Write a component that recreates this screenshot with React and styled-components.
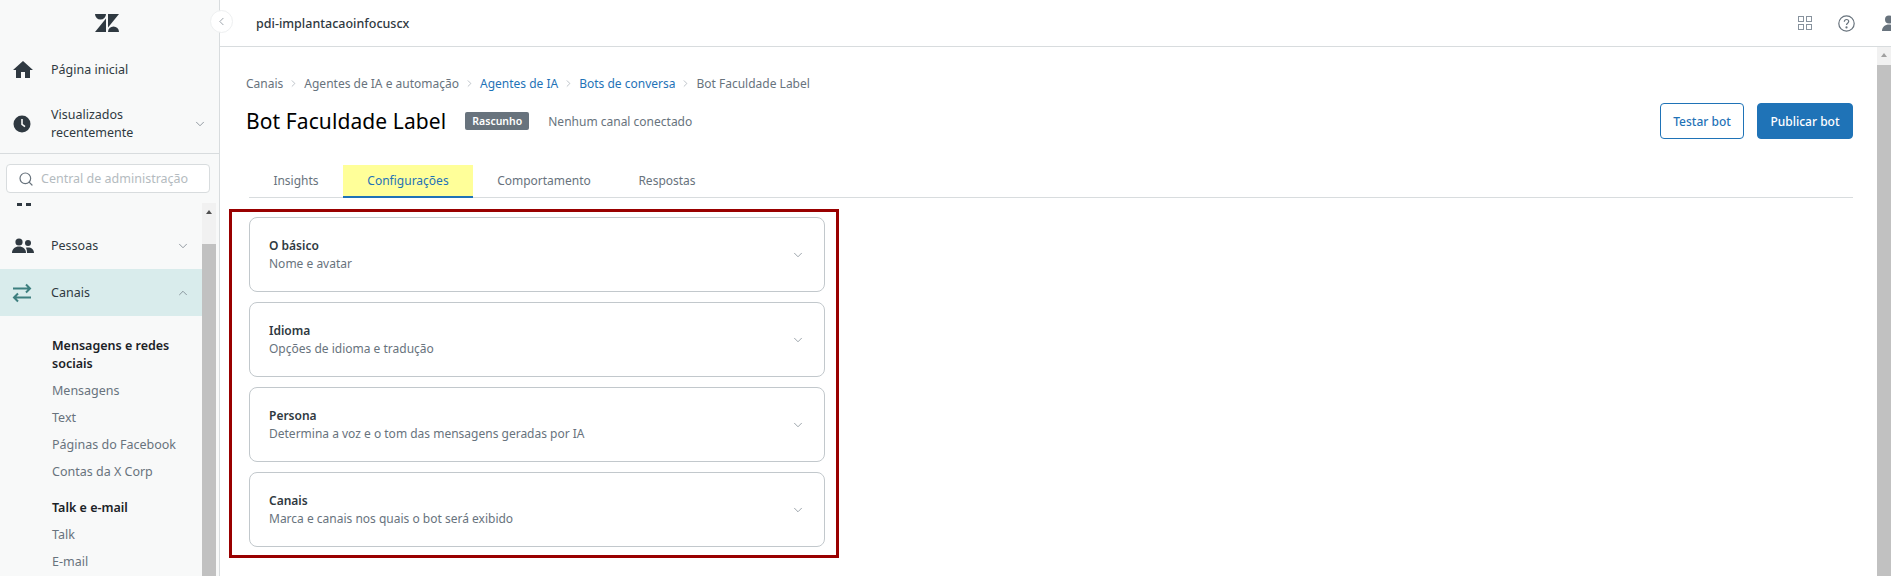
import React from "react";
import styled, { createGlobalStyle } from "styled-components";
import { ChevronDown, ChevronUp, ChevronLeft, Search, ChevronRight } from "lucide-react";

const GlobalStyle = createGlobalStyle`
  html, body { margin: 0; padding: 0; height: 100%; overflow: hidden; background: #fff; }
  body { font-family: "Noto Sans", "Open Sans", sans-serif; font-size: 13px; color: #2f3941; }
  * { box-sizing: border-box; }
`;

const Page = styled.div`
  display: flex;
  width: 1891px;
  height: 576px;
  overflow: hidden;
`;

// SIDEBAR
const Sidebar = styled.aside`
  width: 220px;
  flex: none;
  display: flex;
  flex-direction: column;
  height: 576px;
  background: #f8f9f9;
  border-right: 1px solid #d8dcde;
`;
const LogoRow = styled.div`
  height: 46px;
  display: flex;
  align-items: center;
  justify-content: center;
  padding-right: 5px;
`;
const TopNav = styled.div`
  height: 108px;
  border-bottom: 1px solid #d8dcde;
`;
const NavRow = styled.div`
  display: flex;
  align-items: center;
  height: ${(p) => p.$h || 48}px;
  padding-left: 12px;
  padding-right: ${(p) => p.$pr || 16}px;
  background: ${(p) => (p.$active ? "#d9ecec" : "transparent")};
  color: #2f3941;
`;
const NavIcon = styled.span`
  width: 39px;
  flex: none;
  display: flex;
  color: ${(p) => p.$color || "#2f3941"};
`;
const NavLabel = styled.span`
  flex: 1;
  font-size: 12.5px;
  line-height: 18px;
`;
const SearchWrap = styled.div`
  padding: 10px 9px 10px 6px;
`;
const SearchBox = styled.div`
  height: 29px;
  display: flex;
  align-items: center;
  gap: 7px;
  padding-left: 11px;
  background: #fff;
  border: 1px solid #d8dcde;
  border-radius: 4px;
  color: #b4bbc0;
  font-size: 12.5px;
  svg { color: #68737d; }
`;
const SideBody = styled.div`
  flex: 1;
  display: flex;
  overflow: hidden;
`;
const SideList = styled.div`
  width: 202px;
  overflow: hidden;
`;
const ClippedRow = styled.div`
  height: 18px;
  overflow: hidden;
  position: relative;
  margin-bottom: 1px;
`;
const ClippedInner = styled.div`
  display: flex;
  align-items: center;
  margin-top: -14px;
  padding-left: 16px;
  font-size: 12.5px;
  color: #2f3941;
`;
const SubMenu = styled.div`
  padding: 21px 10px 0 52px;
`;
const SubTitle = styled.div`
  font-size: 12.5px;
  line-height: 18px;
  font-weight: 600;
  color: #1b2227;
  margin-bottom: 4px;
  margin-top: ${(p) => p.$mt || 0}px;
`;
const SubItem = styled.div`
  font-size: 12.5px;
  line-height: 27px;
  color: #68737d;
`;
const Scrollbar = styled.div`
  width: 17px;
  flex: none;
  display: flex;
  flex-direction: column;
  align-items: center;
  background: #f1f1f1;
  border-right: 3px solid #f8f9f9;
`;
const ScrollUp = styled.div`
  height: 41px;
  width: 100%;
  padding-top: 7px;
  display: flex;
  justify-content: center;
`;
const ScrollArrow = styled.div`
  width: 0;
  height: 0;
  border-left: 3.5px solid transparent;
  border-right: 3.5px solid transparent;
  border-bottom: 4px solid ${(p) => p.$color || "#505050"};
`;
const ScrollThumb = styled.div`
  flex: 1;
  width: 100%;
  background: #c1c1c1;
`;

const CollapseButton = styled.button`
  position: absolute;
  left: 210px;
  top: 10px;
  width: 23px;
  height: 23px;
  padding: 0;
  display: flex;
  align-items: center;
  justify-content: center;
  background: #fff;
  border: 1px solid #eef0f1;
  border-radius: 50%;
  color: #68737d;
`;

// MAIN
const Main = styled.main`
  flex: 1;
  min-width: 0;
  display: flex;
  flex-direction: column;
`;
const TopBar = styled.header`
  height: 47px;
  flex: none;
  display: flex;
  align-items: center;
  padding: 0 0 0 36px;
  border-bottom: 1px solid #d8dcde;
  font-size: 12.5px;
  color: #2f3941;
`;
const Brand = styled.span`
  flex: 1;
  font-weight: 500;
`;
const TopIcons = styled.div`
  display: flex;
  align-items: center;
  gap: 26px;
  margin-right: -6px;
  color: #68737d;
`;
const MainBody = styled.div`
  flex: 1;
  display: flex;
  min-height: 0;
`;
const Content = styled.div`
  flex: 1;
  min-width: 0;
  padding: 27px 0 0 9px;
`;
const Crumbs = styled.nav`
  display: flex;
  align-items: center;
  padding-left: 17px;
  height: 18px;
  font-size: 12px;
  color: #68737d;
  gap: 5px;
  svg { color: #87929d; }
`;
const CrumbLink = styled.span`
  color: ${(p) => (p.$link ? "#1f73b7" : "#68737d")};
`;
const TitleRow = styled.div`
  display: flex;
  align-items: center;
  margin: 11px 0 0;
  padding: 0 24px 0 17px;
  height: 36px;
`;
const Title = styled.h1`
  margin: 0;
  font-size: 21px;
  font-weight: 400;
  color: #000;
  letter-spacing: 0.1px;
`;
const Badge = styled.span`
  margin-left: 19px;
  height: 18px;
  padding: 0 7px;
  display: flex;
  align-items: center;
  background: #68737d;
  color: #fff;
  border-radius: 2px;
  font-size: 10.5px;
  font-weight: 600;
`;
const Status = styled.span`
  margin-left: 19px;
  flex: 1;
  font-size: 12px;
  color: #68737d;
`;
const Button = styled.button`
  height: 36px;
  margin-left: 13px;
  width: ${(p) => p.$w}px;
  border: 1px solid #1f73b7;
  border-radius: 4px;
  background: ${(p) => (p.$primary ? "#1f73b7" : "#fff")};
  color: ${(p) => (p.$primary ? "#fff" : "#1f73b7")};
  font: 500 12px "Noto Sans", sans-serif;
`;
const Tabs = styled.div`
  display: flex;
  margin: 26px 24px 0 20px;
  height: 33px;
  border-bottom: 1px solid #d8dcde;
`;
const Tab = styled.div`
  width: ${(p) => p.$w}px;
  height: 33px;
  display: flex;
  align-items: center;
  justify-content: center;
  font-size: 12px;
  color: ${(p) => (p.$active ? "#1f73b7" : "#68737d")};
  background: ${(p) => (p.$active ? "#ffff99" : "transparent")};
  border-bottom: 2px solid ${(p) => (p.$active ? "#1f73b7" : "transparent")};
`;
const Frame = styled.section`
  width: 610px;
  height: 349px;
  margin-top: 11px;
  padding: 5px 11px 0 17px;
  border: 3px solid #990000;
  display: flex;
  flex-direction: column;
  gap: 10px;
`;
const Card = styled.div`
  height: 75px;
  flex: none;
  display: flex;
  align-items: center;
  padding: 0 19px;
  border: 1px solid #c2c8cc;
  border-radius: 8px;
  background: #fff;
  svg { color: #68737d; }
`;
const CardText = styled.div`
  flex: 1;
`;
const CardTitle = styled.div`
  font-size: 12px;
  line-height: 18px;
  font-weight: 600;
  color: #2f3941;
`;
const CardSub = styled.div`
  font-size: 12px;
  line-height: 18px;
  color: #68737d;
`;
const PageScroll = styled(Scrollbar)`
  width: 14px;
  border-right: 0;
`;

const ZendeskLogo = () => (
  <svg width="24" height="18" viewBox="0 0 24 18" fill="#2f3941">
    <path d="M11 4.6V18H0z" />
    <path d="M11 0A5.5 5.5 0 0 1 0 0z" />
    <path d="M13 18V4.6L24 18z" transform="translate(0 0)" opacity="0" />
    <path d="M13 13.4V0h11z" />
    <path d="M13 18a5.5 5.5 0 0 1 11 0z" />
  </svg>
);

const HomeIcon = () => (
  <svg width="22" height="20" viewBox="0 0 22 20" fill="currentColor">
    <path d="M11 1 1 10h3v8h5v-6h4v6h5v-8h3z" />
  </svg>
);

const ClockIcon = () => (
  <svg width="20" height="20" viewBox="0 0 20 20">
    <circle cx="10" cy="10" r="8.5" fill="currentColor" />
    <path d="M10 5v5.3l3 2.4" fill="none" stroke="#f8f9f9" strokeWidth="1.6" />
  </svg>
);

const PeopleIcon = () => (
  <svg width="22" height="16" viewBox="0 0 22 16" fill="currentColor">
    <circle cx="7" cy="4" r="3.6" />
    <circle cx="16" cy="5" r="3" />
    <path d="M0 15c0-4 3-6.500 7-6.500s7 2.500 7 6.500z" />
    <path d="M15 15h7c0-3.500-2.500-5.500-6-5.500-.8 0-1.500.1-2.200.3 1 1.300 1.200 3.400 1.200 5.200z" />
  </svg>
);

const SwapIcon = () => (
  <svg width="20" height="20" viewBox="0 0 20 20" fill="none" stroke="currentColor" strokeWidth="2">
    <path d="M1 5.500h16M14 1.500l4 4-4 4" />
    <path d="M19 14.500H3M6 10.500l-4 4 4 4" />
  </svg>
);

const GridIcon = () => (
  <svg width="14" height="14" viewBox="0 0 14 14" fill="none" stroke="#87929d" strokeWidth="1">
    <rect x="0.500" y="0.500" width="5" height="5" />
    <rect x="8.500" y="0.500" width="5" height="5" />
    <rect x="0.500" y="8.500" width="5" height="5" />
    <rect x="8.500" y="8.500" width="5" height="5" />
  </svg>
);

const HelpIcon = () => (
  <svg width="17" height="17" viewBox="0 0 17 17" fill="none" stroke="#68737d" strokeWidth="1.200">
    <circle cx="8.500" cy="8.500" r="7.700" />
    <path d="M6.300 6.700c0-1.400 1-2.200 2.200-2.200s2.200.8 2.200 2c0 1.700-2.200 1.700-2.200 3.500" />
    <circle cx="8.500" cy="12.400" r="0.500" fill="#68737d" />
  </svg>
);

const UserIcon = () => (
  <svg width="16" height="16" viewBox="0 0 16 16" fill="#68737d">
    <circle cx="8" cy="4.500" r="4" />
    <path d="M1 16c0-4 3-6.500 7-6.500s7 2.500 7 6.500z" />
  </svg>
);

const cards = [
  { title: "O básico", sub: "Nome e avatar" },
  { title: "Idioma", sub: "Opções de idioma e tradução" },
  { title: "Persona", sub: "Determina a voz e o tom das mensagens geradas por IA" },
  { title: "Canais", sub: "Marca e canais nos quais o bot será exibido" },
];

const tabs = [
  { label: "Insights", w: 94 },
  { label: "Configurações", w: 130, active: true },
  { label: "Comportamento", w: 142 },
  { label: "Respostas", w: 104 },
];

const App = () => {
  return (
    <Page>
      <GlobalStyle />
      <Sidebar>
        <LogoRow><ZendeskLogo /></LogoRow>
        <TopNav>
          <NavRow $h={48}>
            <NavIcon><HomeIcon /></NavIcon>
            <NavLabel>Página inicial</NavLabel>
          </NavRow>
          <NavRow $h={60} $pr={12}>
            <NavIcon><ClockIcon /></NavIcon>
            <NavLabel>Visualizados<br />recentemente</NavLabel>
            <ChevronDown size={14} strokeWidth={1.2} color="#68737d" />
          </NavRow>
        </TopNav>
        <SearchWrap>
          <SearchBox>
            <Search size={16} strokeWidth={1.8} />
            Central de administração
          </SearchBox>
        </SearchWrap>
        <SideBody>
          <SideList>
            <ClippedRow>
              <ClippedInner>
                <NavIcon>
                  <svg width="16" height="16" viewBox="0 0 16 16" fill="#2f3941">
                    <rect x="1" y="11" width="5" height="5" />
                    <rect x="10" y="11" width="5" height="5" />
                  </svg>
                </NavIcon>
                Conta
              </ClippedInner>
            </ClippedRow>
            <NavRow $h={47} $pr={12}>
              <NavIcon><PeopleIcon /></NavIcon>
              <NavLabel>Pessoas</NavLabel>
              <ChevronDown size={14} strokeWidth={1.2} color="#68737d" />
            </NavRow>
            <NavRow $h={47} $pr={12} $active>
              <NavIcon $color="#3d7f7f"><SwapIcon /></NavIcon>
              <NavLabel>Canais</NavLabel>
              <ChevronUp size={14} strokeWidth={1.2} color="#68737d" />
            </NavRow>
            <SubMenu>
              <SubTitle>Mensagens e redes sociais</SubTitle>
              <SubItem>Mensagens</SubItem>
              <SubItem>Text</SubItem>
              <SubItem>Páginas do Facebook</SubItem>
              <SubItem>Contas da X Corp</SubItem>
              <SubTitle $mt={14}>Talk e e-mail</SubTitle>
              <SubItem>Talk</SubItem>
              <SubItem>E-mail</SubItem>
            </SubMenu>
          </SideList>
          <Scrollbar>
            <ScrollUp><ScrollArrow /></ScrollUp>
            <ScrollThumb />
          </Scrollbar>
        </SideBody>
      </Sidebar>
      <CollapseButton><ChevronLeft size={13} strokeWidth={1.2} /></CollapseButton>
      <Main>
        <TopBar>
          <Brand>pdi-implantacaoinfocuscx</Brand>
          <TopIcons>
            <GridIcon />
            <HelpIcon />
            <UserIcon />
          </TopIcons>
        </TopBar>
        <MainBody>
          <Content>
            <Crumbs>
              <CrumbLink>Canais</CrumbLink>
              <ChevronRight size={11} strokeWidth={1.2} />
              <CrumbLink>Agentes de IA e automação</CrumbLink>
              <ChevronRight size={11} strokeWidth={1.2} />
              <CrumbLink $link>Agentes de IA</CrumbLink>
              <ChevronRight size={11} strokeWidth={1.2} />
              <CrumbLink $link>Bots de conversa</CrumbLink>
              <ChevronRight size={11} strokeWidth={1.2} />
              <CrumbLink>Bot Faculdade Label</CrumbLink>
            </Crumbs>
            <TitleRow>
              <Title>Bot Faculdade Label</Title>
              <Badge>Rascunho</Badge>
              <Status>Nenhum canal conectado</Status>
              <Button $w={84}>Testar bot</Button>
              <Button $w={96} $primary>Publicar bot</Button>
            </TitleRow>
            <Tabs>
              {tabs.map((t) => (
                <Tab key={t.label} $w={t.w} $active={t.active}>{t.label}</Tab>
              ))}
            </Tabs>
            <Frame>
              {cards.map((c) => (
                <Card key={c.title}>
                  <CardText>
                    <CardTitle>{c.title}</CardTitle>
                    <CardSub>{c.sub}</CardSub>
                  </CardText>
                  <ChevronDown size={14} strokeWidth={1.1} />
                </Card>
              ))}
            </Frame>
          </Content>
          <PageScroll>
            <ScrollUp style={{ height: 18, paddingTop: 6 }}><ScrollArrow $color="#a0a0a0" /></ScrollUp>
            <ScrollThumb />
          </PageScroll>
        </MainBody>
      </Main>
    </Page>
  );
};

export default App;
